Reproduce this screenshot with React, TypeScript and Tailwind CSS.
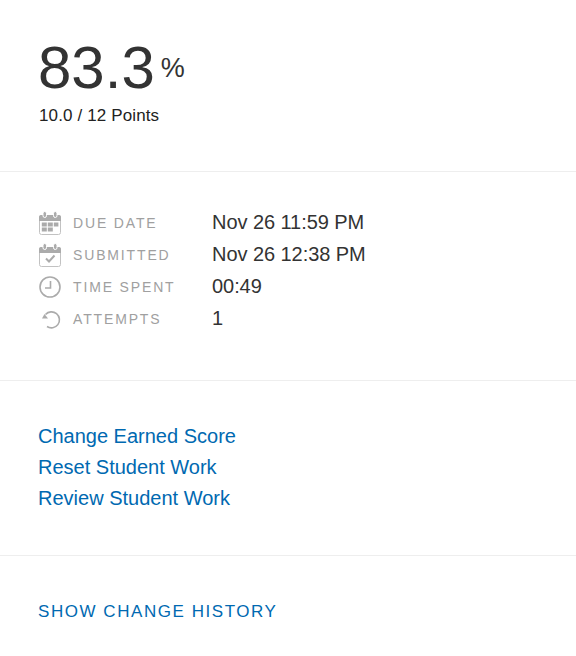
import React from 'react';

function CalendarFrame() {
  return (
    <>
      <rect x="1.5" y="4.5" width="21" height="19" rx="2" stroke="#c2c2c2" strokeWidth="1" />
      <path d="M1 10V6a2 2 0 0 1 2-2h18a2 2 0 0 1 2 2v4z" fill="#ababab" />
      <rect x="5" y="0.5" width="3.5" height="6" rx="1.75" fill="#ababab" stroke="#fff" strokeWidth="1" />
      <rect x="15.5" y="0.5" width="3.5" height="6" rx="1.75" fill="#ababab" stroke="#fff" strokeWidth="1" />
    </>
  );
}

function DueIcon() {
  return (
    <svg width="24" height="24" viewBox="0 0 24 24" fill="none">
      <CalendarFrame />
      <path d="M3.8 11.5h5v4h-5zM9.8 11.5h5v4h-5zM15.8 11.5h4.6v4h-4.6zM3.8 16.5h5v4h-5zM9.8 16.5h5v4h-5z" fill="#ababab" />
    </svg>
  );
}

function SubmittedIcon() {
  return (
    <svg width="24" height="24" viewBox="0 0 24 24" fill="none">
      <CalendarFrame />
      <path d="M8 15.5l3 3 5.5-6" stroke="#ababab" strokeWidth="2" />
    </svg>
  );
}

function ClockIcon() {
  return (
    <svg width="24" height="24" viewBox="0 0 24 24" fill="none">
      <circle cx="12" cy="12" r="10" stroke="#ababab" strokeWidth="1.6" />
      <path d="M12.5 6v7H7" stroke="#ababab" strokeWidth="1.6" />
    </svg>
  );
}

function AttemptsIcon() {
  return (
    <svg width="24" height="24" viewBox="0 0 24 24" fill="none">
      <path d="M7.5 7.5A8 8 0 1 1 9 19.5" stroke="#ababab" strokeWidth="1.6" />
      <path d="M4 11.5h6L6.5 7z" fill="#ababab" />
    </svg>
  );
}

const rows = [
  { icon: <DueIcon />, label: 'DUE DATE', value: 'Nov 26 11:59 PM' },
  { icon: <SubmittedIcon />, label: 'SUBMITTED', value: 'Nov 26 12:38 PM' },
  { icon: <ClockIcon />, label: 'TIME SPENT', value: '00:49' },
  { icon: <AttemptsIcon />, label: 'ATTEMPTS', value: '1' },
];

const links = ['Change Earned Score', 'Reset Student Work', 'Review Student Work'];

export default function App() {
  return (
    <div className="w-[576px] h-[656px] bg-white overflow-hidden font-['Liberation_Sans',Arial,sans-serif]">
      <div className="h-[172px] border-b border-[#eeeeee] pl-[38px] pt-[37px]">
        <div className="flex items-start h-[61px]">
          <span className="text-[60px] leading-[61px] text-[#333333]">83.3</span>
          <span className="ml-[6px] mt-[13px] text-[27px] leading-[36px] text-[#333333]">%</span>
        </div>
        <div className="mt-[8px] ml-[1px] text-[17px] leading-[20px] tracking-[0.13px] text-[#222222]">10.0 / 12 Points</div>
      </div>

      <div className="h-[209px] border-b border-[#eeeeee] pl-[38px] pt-[34px]">
        {rows.map((row) => (
          <div key={row.label} className="flex items-center h-[32px]">
            <div className="w-[25px] mt-[2px] shrink-0">{row.icon}</div>
            <div className="w-[149px] pl-[10px] pt-[2px] shrink-0 text-[14px] tracking-[1.85px] text-[#a0a0a0]">{row.label}</div>
            <div className="text-[20px] tracking-[-0.06px] text-[#333333]">{row.value}</div>
          </div>
        ))}
      </div>

      <div className="h-[175px] border-b border-[#eeeeee] pl-[38px] pt-[40px]">
        {links.map((link) => (
          <a key={link} className="block text-[20px] leading-[31px] text-[#0069b1]">
            {link}
          </a>
        ))}
      </div>

      <div className="pl-[38px] pt-[44px]">
        <a className="text-[17px] leading-[20px] tracking-[1.55px] text-[#0069b1]">SHOW CHANGE HISTORY</a>
      </div>
    </div>
  );
}
